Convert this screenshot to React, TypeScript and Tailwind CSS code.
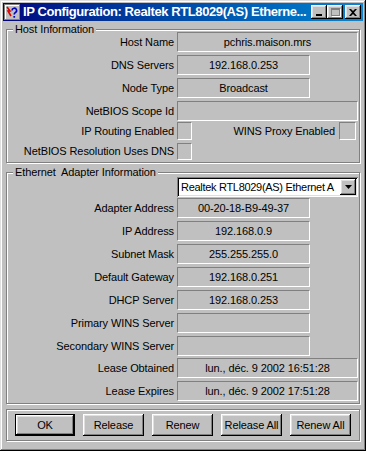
const raised =
  "bg-[#c0c0c0] shadow-[inset_-1px_-1px_0_#000,inset_1px_1px_0_#fff,inset_-2px_-2px_0_#808080,inset_2px_2px_0_#dfdfdf]";

function Field({ value = "", wide = false, h = "h-[20px]" }: { value?: string; wide?: boolean; h?: string }) {
  return (
    <div
      className={`${wide ? "w-[181px]" : "w-[133px]"} ${h} border border-t-[#808080] border-l-[#808080] border-r-white border-b-white flex items-center justify-center whitespace-nowrap overflow-hidden`}
    >
      {value}
    </div>
  );
}

function Row({ label, children, mt }: { label: string; children: React.ReactNode; mt: string }) {
  return (
    <div className={`flex items-center ${mt}`}>
      <div className="w-[167px] text-right whitespace-nowrap">{label}</div>
      <div className="ml-[3px]">{children}</div>
    </div>
  );
}

function Box({ h = "h-[18px]", w = "w-[15px]" }: { h?: string; w?: string }) {
  return <div className={`${w} ${h} border border-t-[#808080] border-l-[#808080] border-r-white border-b-white`} />;
}

function Group({ label, className, children }: { label?: string; className: string; children: React.ReactNode }) {
  return (
    <div className={`relative border border-[#808080] shadow-[inset_1px_1px_0_#fff,1px_1px_0_#fff] ${className}`}>
      {label && (
        <div className="absolute left-[6px] top-[-8px] px-[2px] bg-[#c0c0c0] leading-[14px] whitespace-pre">{label}</div>
      )}
      {children}
    </div>
  );
}

function TitleIcon() {
  return (
    <svg width="16" height="16" viewBox="0 0 16 16" className="shrink-0">
      <rect x="0.5" y="0.5" width="15" height="15" fill="#c0c0c0" stroke="#808080" />
      <path d="M1 1h14v1H2v13H1z" fill="#fff" />
      <path d="M3 3l3 4-2 0 3 5" stroke="#e00000" strokeWidth="1.6" fill="none" />
      <path d="M8 6.5a2.3 2.3 0 1 1 3.4 2c-.9.5-1.2 1-1.2 2" stroke="#0000c0" strokeWidth="1.6" fill="none" />
      <rect x="9.4" y="12" width="1.7" height="1.7" fill="#0000c0" />
    </svg>
  );
}

function CapButton({ children, className = "" }: { children: React.ReactNode; className?: string }) {
  return <div className={`w-[16px] h-[14px] ${raised} flex items-center justify-center ${className}`}>{children}</div>;
}

export default function App() {
  return (
    <div className="w-[366px] h-[451px] bg-[#c0c0c0] p-[3px] shadow-[inset_-1px_-1px_0_#000,inset_1px_1px_0_#dfdfdf,inset_-2px_-2px_0_#808080,inset_2px_2px_0_#fff] font-['Liberation_Sans',Arial,sans-serif] text-[11px] tracking-[-0.1px] text-black flex flex-col">
      {/* title bar */}
      <div className="h-[18px] bg-gradient-to-r from-[#000080] to-[#1084d0] flex items-center pl-[1px] pr-[2px]">
        <TitleIcon />
        <div className="ml-[3px] text-white font-bold text-[13px] tracking-[-0.4px] whitespace-nowrap overflow-hidden flex-1">
          IP Configuration: Realtek RTL8029(AS) Etherne...
        </div>
        <CapButton>
          <div className="w-[6px] h-[2px] bg-black mt-[6px] mr-[1px]" />
        </CapButton>
        <CapButton>
          <div className="w-[9px] h-[8px] border border-[#808080] border-t-2 shadow-[1px_1px_0_#fff] mb-[1px]" />
        </CapButton>
        <CapButton className="ml-[2px]">
          <svg width="8" height="7" viewBox="0 0 8 7">
            <path d="M0 0h2l2 2 2-2h2L5 3.5 8 7H6L4 5 2 7H0l3-3.5z" fill="#000" />
          </svg>
        </CapButton>
      </div>

      <div className="px-[3px]">
        <Group label="Host Information" className="mt-[8px] h-[134px] pt-[2px]">
          <Row label="Host Name" mt="mt-0">
            <Field wide value="pchris.maison.mrs" />
          </Row>
          <Row label="DNS Servers" mt="mt-[3px]">
            <Field value="192.168.0.253" />
          </Row>
          <Row label="Node Type" mt="mt-[3px]">
            <Field value="Broadcast" />
          </Row>
          <Row label="NetBIOS Scope Id" mt="mt-[3px]">
            <Field wide />
          </Row>
          <div className="flex items-center mt-[1px]">
            <div className="w-[167px] text-right whitespace-nowrap">IP Routing Enabled</div>
            <div className="ml-[3px]">
              <Box />
            </div>
            <div className="flex-1 text-right whitespace-nowrap">WINS Proxy Enabled</div>
            <div className="ml-[4px] mr-[3px]">
              <Box w="w-[17px]" />
            </div>
          </div>
          <Row label="NetBIOS Resolution Uses DNS" mt="mt-[3px]">
            <Box h="h-[17px]" />
          </Row>
        </Group>

        <Group label="Ethernet  Adapter Information" className="mt-[9px] h-[232px] pt-[4px]">
          <div className="flex">
            <div className="ml-[170px] w-[181px] h-[20px] bg-white flex items-center shadow-[inset_1px_1px_0_#808080,inset_-1px_-1px_0_#fff,inset_2px_2px_0_#000,inset_-2px_-2px_0_#dfdfdf] p-[2px]">
              <div className="flex-1 pl-[2px] whitespace-nowrap overflow-hidden tracking-[-0.3px]">Realtek RTL8029(AS) Ethernet A</div>
              <div className={`w-[16px] h-[16px] ${raised} flex items-center justify-center`}>
                <svg width="7" height="4" viewBox="0 0 7 4">
                  <path d="M0 0h7L3.5 4z" fill="#000" />
                </svg>
              </div>
            </div>
          </div>
          <Row label="Adapter Address" mt="mt-[1px]">
            <Field value="00-20-18-B9-49-37" />
          </Row>
          <Row label="IP Address" mt="mt-[3px]">
            <Field value="192.168.0.9" />
          </Row>
          <Row label="Subnet Mask" mt="mt-[3px]">
            <Field value="255.255.255.0" />
          </Row>
          <Row label="Default Gateway" mt="mt-[3px]">
            <Field value="192.168.0.251" />
          </Row>
          <Row label="DHCP Server" mt="mt-[3px]">
            <Field value="192.168.0.253" />
          </Row>
          <Row label="Primary WINS Server" mt="mt-[3px]">
            <Field />
          </Row>
          <Row label="Secondary WINS Server" mt="mt-[3px]">
            <Field />
          </Row>
          <Row label="Lease Obtained" mt="mt-[2px]">
            <Field wide value="lun., déc. 9 2002 16:51:28" />
          </Row>
          <Row label="Lease Expires" mt="mt-[3px]">
            <Field wide value="lun., déc. 9 2002 17:51:28" />
          </Row>
        </Group>

        <Group className="mt-[5px] h-[32px] flex items-center pl-[8px] gap-[8px]">
          <div className="border border-black">
            <div className={`w-[58px] h-[20px] ${raised} flex items-center justify-center`}>OK</div>
          </div>
          {["Release", "Renew", "Release All", "Renew All"].map((b) => (
            <div key={b} className={`w-[61px] h-[22px] ${raised} flex items-center justify-center`}>
              {b}
            </div>
          ))}
        </Group>
      </div>
    </div>
  );
}
